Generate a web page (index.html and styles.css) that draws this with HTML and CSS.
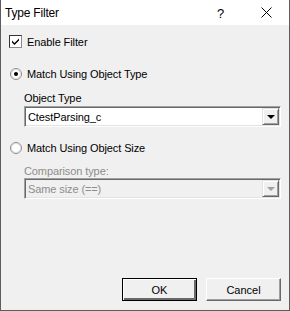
FILE: index.html
```html
<!DOCTYPE html>
<html>
<head>
<meta charset="utf-8">
<link rel="stylesheet" href="styles.css">
</head>
<body>
<div class="window">
  <div class="titlebar">
    <span class="title">Type Filter</span>
    <span class="tb-btn help">?</span>
    <span class="tb-btn close">
      <svg width="11" height="11" viewBox="0 0 11 11"><path d="M0.5 0.5 L10.5 10.5 M10.5 0.5 L0.5 10.5" stroke="#000" stroke-width="1" fill="none"/></svg>
    </span>
  </div>
  <div class="client">
    <div class="row check-row">
      <span class="checkbox">
        <svg width="9" height="9" viewBox="0 0 9 9"><path d="M1 3.5 L3.5 6 L8 1.5 L8 3.5 L3.5 8 L1 5.5 Z" fill="#000"/></svg>
      </span>
      <span class="text">Enable Filter</span>
    </div>
    <div class="row radio-row r1">
      <span class="radio">
        <svg width="12" height="12" viewBox="0 0 12 12">
          <circle cx="6" cy="6" r="5.5" fill="#fff" stroke="#8a8a8a"/>
          <circle cx="6" cy="6" r="4.5" fill="none" stroke="#dcdcdc"/>
          <circle cx="6" cy="6" r="2" fill="#000"/>
        </svg>
      </span>
      <span class="text">Match Using Object Type</span>
    </div>
    <div class="field-label l1">Object Type</div>
    <div class="combo">
      <span class="combo-text">CtestParsing_c</span>
      <span class="combo-btn"><span class="arrow"></span></span>
    </div>
    <div class="row radio-row r2">
      <span class="radio">
        <svg width="12" height="12" viewBox="0 0 12 12">
          <circle cx="6" cy="6" r="5.5" fill="#fff" stroke="#8a8a8a"/>
          <circle cx="6" cy="6" r="4.5" fill="none" stroke="#dcdcdc"/>
        </svg>
      </span>
      <span class="text">Match Using Object Size</span>
    </div>
    <div class="field-label disabled l2">Comparison type:</div>
    <div class="combo combo-disabled">
      <span class="combo-text">Same size (==)</span>
      <span class="combo-btn"><span class="arrow"></span></span>
    </div>
    <div class="buttons">
      <button class="btn default">OK</button>
      <button class="btn">Cancel</button>
    </div>
  </div>
</div>
</body>
</html>
```
FILE: styles.css
```css
html, body {
  margin: 0;
  padding: 0;
  background: #f0f0f0;
}
.window {
  width: 290px;
  height: 311px;
  box-sizing: border-box;
  border: 1px solid #5c5c5c;
  border-top: none;
  display: flex;
  flex-direction: column;
  background: #f0f0f0;
  font-family: "Liberation Sans", Arial, sans-serif;
  font-size: 11px;
  color: #000;
}
.titlebar {
  height: 25px;
  background: #fff;
  display: flex;
  align-items: center;
  flex: none;
}
.title {
  font-size: 12px;
  letter-spacing: -0.2px;
  padding-left: 4px;
  flex: 1;
  margin-top: 1px;
}
.tb-btn {
  width: 45px;
  height: 25px;
  display: flex;
  align-items: center;
  justify-content: center;
}
.help {
  font-size: 13px;
  margin-top: 1px;
}
.close {
  width: 46px;
}
.client {
  flex: 1;
  display: flex;
  flex-direction: column;
  padding: 10px 8px 9px 8px;
}
.row {
  display: flex;
  align-items: center;
  height: 13px;
}
.text {
  letter-spacing: -0.1px;
  white-space: nowrap;
}
.checkbox {
  width: 13px;
  height: 13px;
  box-sizing: border-box;
  background: #fff;
  border-style: solid;
  border-width: 1px;
  border-color: #333 #8a8a8a #8a8a8a #333;
  display: flex;
  align-items: center;
  justify-content: center;
  margin-right: 5px;
}
.radio {
  width: 13px;
  height: 13px;
  display: flex;
  align-items: center;
  justify-content: center;
  margin-right: 5px;
}
.r1 { margin-top: 19px; }
.r2 { margin-top: 14px; }
.field-label {
  margin-left: 15px;
  height: 13px;
  line-height: 13px;
  letter-spacing: -0.1px;
}
.l1 { margin-top: 12px; }
.l2 { margin-top: 11px; }
.disabled { color: #8d8d8d; }
.combo {
  margin-left: 15px;
  margin-top: 1px;
  height: 21px;
  box-sizing: border-box;
  background: #fff;
  border-style: solid;
  border-width: 1px;
  border-color: #a0a0a0 #fff #fff #a0a0a0;
  box-shadow: inset 1px 1px 0 #696969, inset -1px -1px 0 #e3e3e3;
  display: flex;
  align-items: center;
  padding: 1px 1px 1px 2px;
}
.combo-text {
  flex: 1;
  letter-spacing: -0.1px;
  padding-left: 1px;
  white-space: nowrap;
}
.combo-disabled {
  background: #f0f0f0;
  margin-top: 0;
}
.combo-disabled .combo-text { color: #8d8d8d; }
.combo-btn {
  width: 17px;
  height: 17px;
  box-sizing: border-box;
  background: #f0f0f0;
  border-style: solid;
  border-width: 1px;
  border-color: #e3e3e3 #696969 #696969 #e3e3e3;
  box-shadow: inset 1px 1px 0 #fff, inset -1px -1px 0 #a0a0a0;
  display: flex;
  align-items: center;
  justify-content: center;
}
.arrow {
  width: 0;
  height: 0;
  border-left: 4px solid transparent;
  border-right: 4px solid transparent;
  border-top: 4px solid #000;
  margin-top: 1px;
}
.combo-disabled .arrow { border-top-color: #a0a0a0; }
.buttons {
  margin-top: auto;
  display: flex;
  justify-content: flex-end;
  gap: 9px;
}
.btn {
  width: 75px;
  height: 23px;
  box-sizing: border-box;
  margin: 0;
  padding: 0;
  font-family: "Liberation Sans", Arial, sans-serif;
  font-size: 11px;
  color: #000;
  background: #f0f0f0;
  border-style: solid;
  border-width: 1px;
  border-color: #fff #696969 #696969 #fff;
  box-shadow: inset -1px -1px 0 #a0a0a0;
}
.btn.default {
  border: 1px solid #000;
  box-shadow: inset 1px 1px 0 #fff, inset -2px -2px 0 #696969, inset -1px -1px 0 #696969;
}
```
